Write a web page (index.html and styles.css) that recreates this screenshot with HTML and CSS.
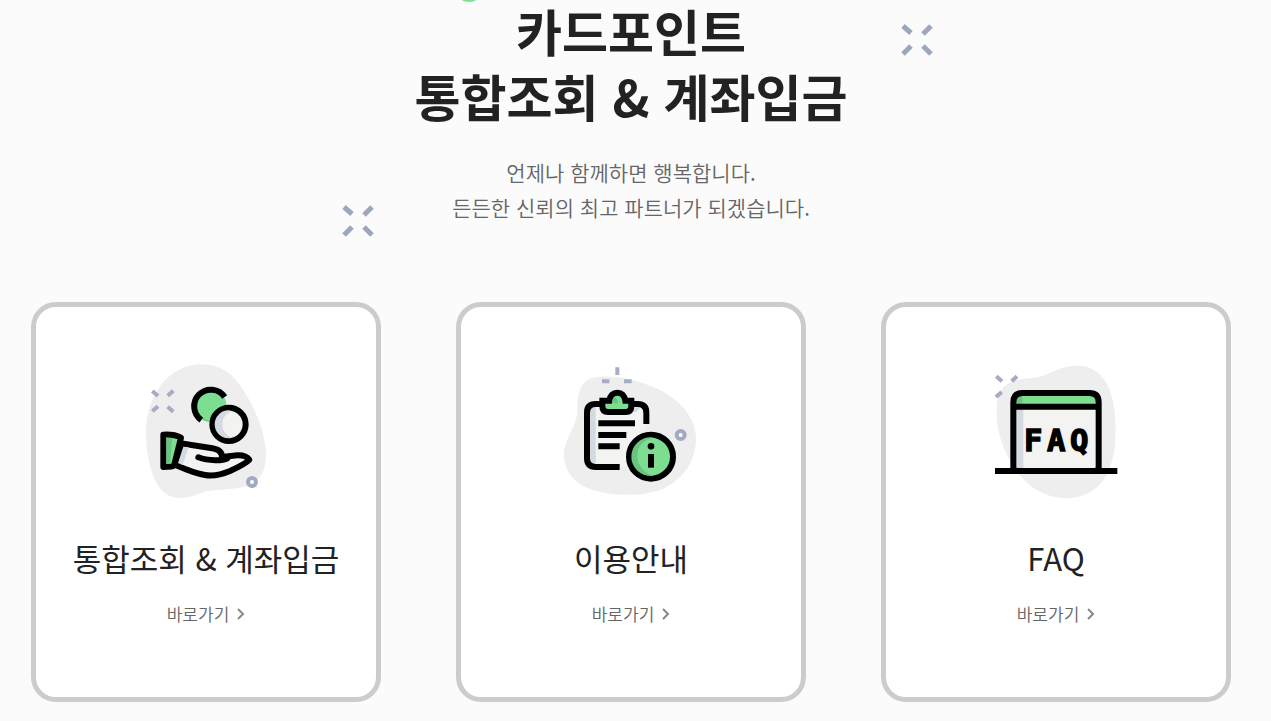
FILE: index.html
```html
<!DOCTYPE html>
<html lang="ko">
<head>
<meta charset="utf-8">
<meta name="viewport" content="width=device-width, initial-scale=1">
<title>카드포인트 통합조회 &amp; 계좌입금</title>
<link rel="stylesheet" href="styles.css">
</head>
<body>
<main class="page">
  <header class="hero">
    <span class="dot"></span>
    <svg class="spark spark-right" viewBox="0 0 34 34" aria-hidden="true"><path d="M3 3l8 7M31 3l-8 8M3 31l8-8M31 31l-8-8"/></svg>
    <svg class="spark spark-left" viewBox="0 0 34 34" aria-hidden="true"><path d="M3 3l8 7M31 3l-8 8M3 31l8-8M31 31l-8-8"/></svg>
    <h1 class="hero-title">카드포인트<br>통합조회 &amp; 계좌입금</h1>
    <p class="hero-text">언제나 함께하면 행복합니다.<br>든든한 신뢰의 최고 파트너가 되겠습니다.</p>
  </header>
  <section class="cards">
    <article class="card">
      <svg class="card-icon" viewBox="3 0 450 450" aria-hidden="true">
        <path class="blob" d="M215 28C285 28 320 70 352 125C385 180 408 250 408 300C408 365 375 393 320 400C265 408 240 402 200 419C165 432 125 435 98 409C65 377 48 300 48 235C48 110 125 28 215 28Z"/>
        <path class="mist" d="M67 108l17 15M130 107l-17 15M67 169l17-15M130 170l-17-15"/>
        <circle class="ring" cx="366" cy="381" r="12"/>
        <circle class="green" cx="240" cy="151" r="49"/>
        <path class="shade" d="M235 103a49 49 0 0 0-12 93q14 6 22 4a50 50 0 0 1-10-97Z"/>
        <path class="ink" d="M284 126A50 50 0 1 0 214 195"/>
        <circle class="paper ink" cx="297" cy="208" r="50"/>
        <path class="tint" d="M296 166a42 42 0 0 0 0 84q6 0 10-2a42 42 0 0 1 0-80Z"/>
        <path class="paper ink round" d="M160 266L247 280Q276 285 276 306L322 301Q348 300 358 314Q347 326 300 348Q258 366 225 360Q192 354 142 332Z"/>
        <path class="tint" d="M160 275l16 2-18 53-14-6Z"/>
        <path class="ink round" d="M205 307C235 319 280 317 292 310"/>
        <path class="green ink round" d="M100 239Q132 237 153 248L132 332Q128 336 100 336Z"/>
        <path class="shade" d="M109 248l17 1-6 78h-11Z"/>
      </svg>
      <h2 class="card-title">통합조회 &amp; 계좌입금</h2>
      <a class="card-link" href="#lookup">바로가기<svg class="arrow" viewBox="0 0 8 14" aria-hidden="true"><path d="M1 2l5 5-5 5"/></svg></a>
    </article>
    <article class="card">
      <svg class="card-icon" viewBox="3 0 450 450" aria-hidden="true">
        <path class="blob" d="M135 65C190 62 250 75 310 103C375 134 423 190 423 250C423 320 385 370 330 398C280 424 175 428 105 402C55 383 27 346 27 300C27 250 67 215 67 165C67 100 82 68 135 65Z"/>
        <path class="mist" d="M187 37v23M141 79h22M207 79h23"/>
        <circle class="ring" cx="377" cy="240" r="12"/>
        <path class="paper" d="M110 147H270L275 207L218 337H97V160Z"/>
        <path class="tint" d="M105 155h17v173h-17ZM237 157h20l-14 14h-10Z"/>
        <path class="ink" d="M148 147H122Q96 147 96 173V310Q96 336 122 336H194M220 147H248Q274 147 274 173V207"/>
        <path class="green ink" d="M142 137H163Q167 113 187 113Q207 113 211 137H229V153Q229 171 212 171H159Q142 171 142 153Z"/>
        <path class="shade" d="M178 125q-6 4-7 20h18q-2-16-11-20Z"/>
        <path class="ink" d="M130 205H240M130 240H214M130 274H194"/>
        <circle class="green ink" cx="288" cy="305" r="66"/>
        <path class="shade" d="M287 247a58 58 0 0 0 0 116l10-1a62 62 0 0 1-50-57q0-48 50-57Z"/>
        <circle cx="288" cy="274" r="10"/>
        <path class="ink" d="M288 297v41"/>
      </svg>
      <h2 class="card-title">이용안내</h2>
      <a class="card-link" href="#guide">바로가기<svg class="arrow" viewBox="0 0 8 14" aria-hidden="true"><path d="M1 2l5 5-5 5"/></svg></a>
    </article>
    <article class="card">
      <svg class="card-icon" viewBox="3 0 450 450" aria-hidden="true">
        <path class="blob" d="M285 32C350 29 387 75 400 145C412 220 410 300 380 361C350 412 300 438 230 427C170 415 137 386 105 340C66 283 48 225 50 160C52 90 90 75 150 70C205 66 230 34 285 32Z"/>
        <path class="mist" d="M49 64l17 15M111 64l-16 15M48 126l17-15"/>
        <path class="paper" d="M100 150H356V348H100Z"/>
        <path class="tint" d="M108 162h22v180h-22Z"/>
        <path class="green" d="M107 150V133Q107 120 120 120H338Q351 120 351 133V150Z"/>
        <path class="shade" d="M107 147v-12q0-12 20-13v25Z"/>
        <path class="ink" d="M100 336V142Q100 114 128 114H328Q356 114 356 142V336Q356 348 344 348H112Q100 348 100 336ZM100 155H356M45 348H412"/>
        <text class="icon-text" x="132 201 270" y="288">FAQ</text>
      </svg>
      <h2 class="card-title">FAQ</h2>
      <a class="card-link" href="#faq">바로가기<svg class="arrow" viewBox="0 0 8 14" aria-hidden="true"><path d="M1 2l5 5-5 5"/></svg></a>
    </article>
  </section>
</main>
</body>
</html>
```
FILE: styles.css
```css
* { box-sizing: border-box; }
body {
  margin: 0;
  padding-right: 9px;
  background: #fbfbfb;
  color: #222;
  font-family: "Noto Sans CJK KR", "Noto Sans", sans-serif;
}
.page {
  max-width: 1200px;
  margin: 0 auto;
  padding-bottom: 19px;
}
.hero {
  position: relative;
  margin-top: -2px;
  text-align: center;
}
.hero-title {
  margin: 0;
  font-size: 50px;
  line-height: 65px;
  font-weight: 700;
}
.hero-text {
  margin: 27px 0 0;
  color: #666;
  font-size: 21px;
  line-height: 35px;
  font-weight: 350;
}
.dot {
  position: absolute;
  top: -26px;
  left: calc(50% - 177px);
  width: 30px;
  height: 30px;
  border-radius: 50%;
  background: #7fe093;
}
.spark {
  position: absolute;
  width: 34px;
  height: 34px;
  fill: none;
  stroke: #9ca6bc;
  stroke-width: 5;
}
.spark-right { top: 25px; left: calc(50% + 269px); }
.spark-left { top: 206px; left: calc(50% - 290px); }
.cards {
  display: grid;
  grid-template-columns: repeat(3, 1fr);
  gap: 75px;
  margin-top: 77px;
}
.card {
  display: flex;
  flex-direction: column;
  align-items: center;
  min-height: 400px;
  padding: 48px 16px;
  border: 5px solid #ccc;
  border-radius: 25px;
  background: #fff;
}
.card-icon {
  width: 150px;
  height: 150px;
}
.card-title {
  margin: 31px 0 0;
  font-size: 31px;
  line-height: 44px;
  font-weight: 400;
  white-space: nowrap;
}
.card-link {
  display: flex;
  align-items: center;
  gap: 8px;
  margin-top: 21px;
  color: #666;
  font-size: 17px;
  line-height: 26px;
  font-weight: 350;
  text-decoration: none;
}
.arrow {
  width: 8px;
  height: 14px;
  fill: none;
  stroke: #888;
  stroke-width: 2;
}
.blob { fill: #eee; }
.paper { fill: #f3f3f2; }
.green { fill: #7ddd91; }
.shade { fill: #6bc381; }
.tint { fill: #d4d9e2; }
.mist { fill: none; stroke: #a4adc2; stroke-width: 12; }
.ring { fill: #fff; stroke: #a0aac0; stroke-width: 12; }
.ink { stroke: #000; stroke-width: 18; }
.ink:not(.green):not(.paper) { fill: none; }
.round { stroke-linecap: round; stroke-linejoin: round; }
.icon-text {
  font-family: "DejaVu Sans Mono", monospace;
  font-size: 92px;
  font-weight: 700;
  stroke: #000;
  stroke-width: 4;
}
```
